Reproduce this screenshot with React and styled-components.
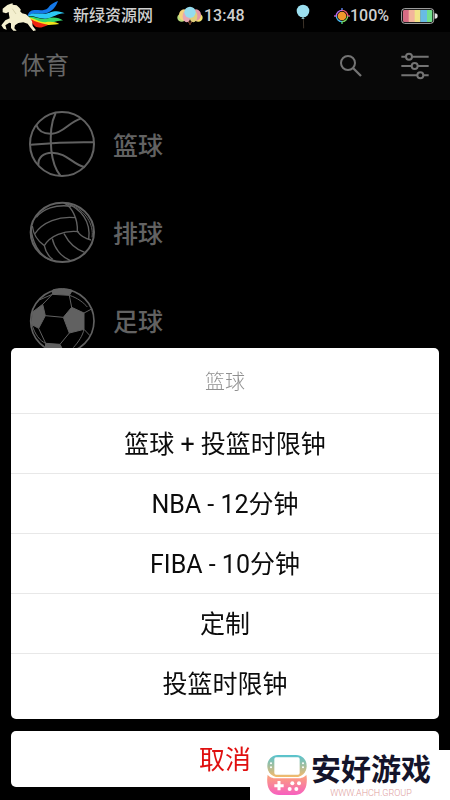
import React, { useState } from "react";
import styled, { createGlobalStyle } from "styled-components";

const sports = [
  { name: "篮球", Icon: Basketball },
  { name: "排球", Icon: Volleyball },
  { name: "足球", Icon: Football },
];

const options = [
  "篮球 + 投篮时限钟",
  "NBA - 12分钟",
  "FIBA - 10分钟",
  "定制",
  "投篮时限钟",
];

function App() {
  const [sheetOn, setSheetOn] = useState(true);
  const closeSheet = () => {
    setSheetOn(false);
  };

  return (
    <>
      <GlobalStyle />
      <StatusBar>
        <HorseLogo />
        <Carrier>新绿资源网</Carrier>
        <ClockBox>
          <Balloons />
          <span>13:48</span>
        </ClockBox>
        <StatusRight>
          <Balloon />
          <PowerBox>
            <Target />
            <span>100%</span>
          </PowerBox>
          <Battery />
        </StatusRight>
      </StatusBar>

      <Header>
        <Title>体育</Title>
        <HeaderButtons>
          <IconButton aria-label="搜索">
            <SearchIcon />
          </IconButton>
          <IconButton aria-label="设置">
            <SlidersIcon />
          </IconButton>
        </HeaderButtons>
      </Header>

      <SportList>
        {sports.map(({ name, Icon }) => (
          <li key={name}>
            <SportRow onClick={() => setSheetOn(true)}>
              <Icon />
              <span>{name}</span>
            </SportRow>
          </li>
        ))}
      </SportList>

      {sheetOn && (
        <SheetWrap>
          <Sheet>
            <SheetTitle>篮球</SheetTitle>
            {options.map((option) => (
              <Option key={option} onClick={closeSheet}>
                {option}
              </Option>
            ))}
          </Sheet>
          <Cancel onClick={closeSheet}>取消</Cancel>
        </SheetWrap>
      )}

      <Brand>
        <GamepadLogo />
        <BrandText>
          <BrandName>安好游戏</BrandName>
          <BrandUrl>WWW.AHCH.GROUP</BrandUrl>
        </BrandText>
      </Brand>
    </>
  );
}

export default App;

function HorseLogo() {
  return (
    <svg width="66" height="32" viewBox="0 0 198 96" fill="none">
      <path
        d="M82 50C90 14 124 42 144 24C152 12 164 6 174 3C168 20 158 34 138 40C120 44 100 34 82 50Z"
        fill="#1478e8"
      />
      <path
        d="M82 50C98 32 122 48 148 38C168 30 182 34 194 40C170 40 160 54 138 56C116 58 98 42 82 50Z"
        fill="#2cc8f4"
      />
      <path
        d="M82 51C100 44 116 60 140 56C158 50 176 52 190 62C170 60 154 72 134 70C112 68 100 56 82 51Z"
        fill="#38d868"
      />
      <path
        d="M82 53C98 50 112 66 136 67C152 64 168 66 178 72C154 74 138 78 122 74C104 70 96 60 82 53Z"
        fill="#f4e41c"
      />
      <path
        d="M86 57C102 60 114 70 144 74C128 84 110 86 102 76Z"
        fill="#ee2412"
      />
      <path
        d="M8 26L22 15L32 11L38 10L38 14L50 16L58 23L63 30L60 33L66 40L78 43L89 53L96 64L98 78L108 91L100 93L90 81L83 71L70 67L55 69L45 76L43 85L50 92L40 92L33 84L33 70L28 68L16 76L20 89L11 86L4 76L16 61L29 55L27 44L26 36L18 40L8 37Z"
        fill="#f4efcf"
      />
      <path d="M37 26L48 42" stroke="#c9c39c" strokeWidth="2" />
    </svg>
  );
}

function Balloons() {
  return (
    <svg width="26" height="22" viewBox="0 0 78 66">
      <path d="M30 44L39 58L48 44" stroke="#a3583a" strokeWidth="3" fill="none" />
      <ellipse cx="14" cy="38" rx="13" ry="12" fill="#b8dd7c" />
      <ellipse cx="64" cy="38" rx="13" ry="12" fill="#f3e16c" />
      <ellipse cx="21" cy="30" rx="15" ry="17" fill="#f4d27c" />
      <ellipse cx="57" cy="30" rx="15" ry="17" fill="#e596a4" />
      <ellipse cx="29" cy="34" rx="12" ry="18" fill="#e7a6b4" />
      <ellipse cx="49" cy="34" rx="12" ry="18" fill="#dfcf7c" />
      <circle cx="39" cy="22" r="17" fill="#94dcee" />
      <path d="M39 42L36 60H42Z" fill="#5c3020" />
    </svg>
  );
}

function Balloon() {
  return (
    <svg width="14" height="26" viewBox="0 0 42 78">
      <path d="M22 42L23 76" stroke="#3c3228" strokeWidth="3" />
      <circle cx="21" cy="24" r="19" fill="#9ce0f0" />
      <path d="M21 40L16 48H26Z" fill="#80b4bc" />
    </svg>
  );
}

function Target() {
  return (
    <svg width="16" height="16" viewBox="0 0 48 48" fill="none">
      <path d="M24 0V8" stroke="#5a8cff" strokeWidth="4" />
      <path d="M24 40V48" stroke="#52d870" strokeWidth="4" />
      <path d="M0 24H8" stroke="#d060d8" strokeWidth="4" />
      <path d="M40 24H48" stroke="#e0589c" strokeWidth="4" />
      <path d="M7 24A17 17 0 0 1 24 7" stroke="#b86cf0" strokeWidth="4" />
      <path d="M24 7A17 17 0 0 1 41 24" stroke="#f05c78" strokeWidth="4" />
      <path d="M41 24A17 17 0 0 1 24 41" stroke="#7cd860" strokeWidth="4" />
      <path d="M24 41A17 17 0 0 1 7 24" stroke="#48b4e8" strokeWidth="4" />
      <circle cx="24" cy="24" r="13" fill="#f0982c" />
    </svg>
  );
}

function Battery() {
  return (
    <svg width="37" height="16" viewBox="0 0 111 48">
      <rect x="2" y="2" width="96" height="44" rx="9" fill="#000" stroke="#b8b8b8" strokeWidth="3" />
      <rect x="6" y="6" width="20" height="36" rx="4" fill="#d66c84" />
      <rect x="23" y="6" width="19" height="36" fill="#f3b49c" />
      <rect x="41" y="6" width="18" height="36" fill="#f1e488" />
      <rect x="75" y="6" width="19" height="36" rx="4" fill="#72e08c" />
      <rect x="58" y="6" width="20" height="36" fill="#68bce4" />
      <path d="M101 16C108 16 110 19 110 24C110 29 108 32 101 32Z" fill="#e4e4e4" />
    </svg>
  );
}

function SearchIcon() {
  return (
    <svg width="24" height="24" viewBox="0 0 72 72" fill="none" stroke="#747474">
      <circle cx="27" cy="27" r="21" strokeWidth="6" />
      <path d="M42 42L66 66" strokeWidth="7" />
    </svg>
  );
}

function SlidersIcon() {
  return (
    <svg width="28" height="28" viewBox="0 0 84 84" fill="none" stroke="#747474" strokeWidth="6">
      <path d="M1 14H15M33 14H83M1 42H32M50 42H83M1 70H49M67 70H83" />
      <circle cx="24" cy="14" r="9" />
      <circle cx="41" cy="42" r="9" />
      <circle cx="58" cy="70" r="9" />
    </svg>
  );
}

function Basketball() {
  return (
    <svg width="66" height="66" viewBox="57 30 198 198" fill="none" stroke="#616161" strokeWidth="6">
      <circle cx="156" cy="129" r="96" />
      <path d="M137 36C121 68 120 108 124 148C128 184 138 208 151 224" />
      <path d="M61 131C124 126 190 122 252 124" />
      <path d="M79 72C86 94 104 99 126 98C162 96 174 64 214 52" />
      <path d="M85 192C84 170 100 155 126 155C172 156 184 188 225 199" />
    </svg>
  );
}

function Volleyball() {
  return (
    <svg width="66" height="66" viewBox="57 27 198 198" fill="none" stroke="#616161" strokeWidth="4">
      <ellipse cx="157" cy="127" rx="95" ry="89" strokeWidth="6" />
      <path d="M79 82C98 58 136 42 184 49" />
      <path d="M74 132C98 96 148 78 195 83" />
      <path d="M103 167C120 138 162 120 206 125" />
      <path d="M67 108C70 132 84 154 103 167C106 182 114 198 128 208" />
      <path d="M63 112C66 158 88 194 116 208" />
      <path d="M164 40C184 50 204 84 202 124C212 138 226 146 243 150" />
      <path d="M170 41C212 56 244 94 236 148" />
      <path d="M180 44C226 60 252 104 246 142" strokeWidth="3" />
      <path d="M127 146C132 172 152 200 180 211" />
      <path d="M162 131C176 158 196 178 224 187" />
    </svg>
  );
}

function Football() {
  return (
    <svg width="66" height="66" viewBox="57 36 198 198" fill="none" stroke="#616161" strokeWidth="3">
      <circle cx="157" cy="138" r="95" strokeWidth="5" />
      <g fill="#616161">
        <path d="M128 45C146 39 170 40 187 46L178 61L127 58Z" />
        <path d="M185 97L222 114V163L178 174L160 127Z" />
        <path d="M98 88L68 111L64 148L86 160L106 122Z" />
        <path d="M107 205L150 208L162 232C138 233 118 228 106 220Z" />
      </g>
      <path d="M127 58L98 88M178 61L185 97M106 122L160 127M222 114L243 103M86 160L107 205M178 174L150 208M222 163L240 182M127 58L90 74M178 61C202 68 222 84 232 96M66 148C74 178 90 198 107 205M222 163C218 182 206 200 190 218" />
    </svg>
  );
}

function GamepadLogo() {
  return (
    <svg width="40" height="42" viewBox="0 0 120 126" fill="none">
      <defs>
        <linearGradient id="padTop" x1="0" y1="0" x2="0" y2="1">
          <stop offset="0" stopColor="#55c3cf" />
          <stop offset="1" stopColor="#f5b96a" />
        </linearGradient>
        <linearGradient id="padBottom" x1="0" y1="0" x2="0" y2="1">
          <stop offset="0" stopColor="#fba678" />
          <stop offset="1" stopColor="#f75fc0" />
        </linearGradient>
      </defs>
      <rect x="1" y="3" width="118" height="66" rx="32" fill="url(#padTop)" />
      <rect x="22" y="10" width="76" height="52" rx="5" fill="#fff" />
      <circle cx="12" cy="28" r="3" fill="#fff" />
      <circle cx="12" cy="40" r="3" fill="#fff" />
      <circle cx="108" cy="28" r="3" fill="#fff" />
      <circle cx="108" cy="40" r="3" fill="#fff" />
      <path
        d="M2 62C12 74 24 73 38 73H82C96 73 108 74 118 62C120 72 120 82 118 94C114 112 102 123 84 123H36C18 123 6 112 2 94C0 82 0 72 2 62Z"
        fill="url(#padBottom)"
      />
      <path d="M36 81V109M22 95H50" stroke="#fff" strokeWidth="9" />
      <circle cx="76" cy="88" r="6" fill="#fff" />
      <circle cx="96" cy="88" r="6" fill="#fff" />
      <circle cx="68" cy="105" r="6" fill="#fff" />
      <circle cx="88" cy="105" r="6" fill="#fff" />
    </svg>
  );
}

const GlobalStyle = createGlobalStyle`
  * {
    box-sizing: border-box;
  }
  body {
    margin: 0;
    background-color: #000;
    font-family: Roboto, "Noto Sans CJK SC", sans-serif;
  }
  button {
    padding: 0;
    border: none;
    background: none;
    font-family: inherit;
    cursor: pointer;
  }
  svg {
    display: block;
    flex-shrink: 0;
  }
`;

const StatusBar = styled.div`
  height: 32px;
  display: flex;
  align-items: center;
  padding-right: 12px;
  font-size: 16px;
  font-weight: 500;
  line-height: 32px;
  color: #cfcfcf;
`;

const Carrier = styled.span`
  margin-left: 7px;
`;

const ClockBox = styled.div`
  display: flex;
  align-items: center;
  gap: 1px;
  margin-left: 24px;
`;

const StatusRight = styled.div`
  display: flex;
  align-items: center;
  gap: 12px;
  margin-left: auto;
`;

const PowerBox = styled.div`
  display: flex;
  align-items: center;
  margin-left: 12px;
`;

const Header = styled.header`
  height: 68px;
  display: flex;
  align-items: center;
  justify-content: space-between;
  padding: 0px 21px;
  background-color: #080808;
`;

const Title = styled.h1`
  margin: 0;
  font-size: 24px;
  font-weight: 400;
  line-height: 32px;
  color: #666;
`;

const HeaderButtons = styled.div`
  display: flex;
  align-items: center;
  gap: 38px;
`;

const IconButton = styled.button`
  display: flex;
`;

const SportList = styled.ul`
  margin: 0;
  padding: 0;
  list-style: none;
`;

const SportRow = styled.button`
  width: 100%;
  height: 88px;
  display: flex;
  align-items: center;
  gap: 18px;
  padding: 0px 29px;
  font-size: 25px;
  font-weight: 500;
  color: #626262;
`;

const SheetWrap = styled.div`
  position: fixed;
  left: 11px;
  right: 11px;
  bottom: 13px;
  display: flex;
  flex-direction: column;
  gap: 12px;
`;

const Sheet = styled.div`
  display: flex;
  flex-direction: column;
  padding-bottom: 6px;
  border-radius: 5px;
  background-color: #fff;
`;

const SheetTitle = styled.div`
  padding-top: 3px;
  font-size: 20px;
  font-weight: 300;
  line-height: 62px;
  text-align: center;
  color: #909090;
`;

const Option = styled.button`
  height: 60px;
  padding-bottom: 3px;
  border-top: 1px solid #e8e8e8;
  font-size: 25px;
  color: #0c0c0c;
`;

const Cancel = styled.button`
  height: 56px;
  padding-bottom: 3px;
  border-radius: 5px;
  background-color: #fff;
  font-size: 26px;
  color: #e01010;
`;

const Brand = styled.div`
  position: fixed;
  right: 0;
  bottom: 0;
  width: 200px;
  height: 50px;
  display: flex;
  align-items: center;
  gap: 4px;
  padding-left: 17px;
  background-color: #fff;
`;

const BrandText = styled.div`
  display: flex;
  flex-direction: column;
  align-items: center;
`;

const BrandName = styled.div`
  font-size: 30px;
  font-weight: 700;
  line-height: 36px;
  color: #14142a;
`;

const BrandUrl = styled.div`
  font-size: 9px;
  font-weight: 300;
  line-height: 10px;
  color: #e0a0a0;
`;
